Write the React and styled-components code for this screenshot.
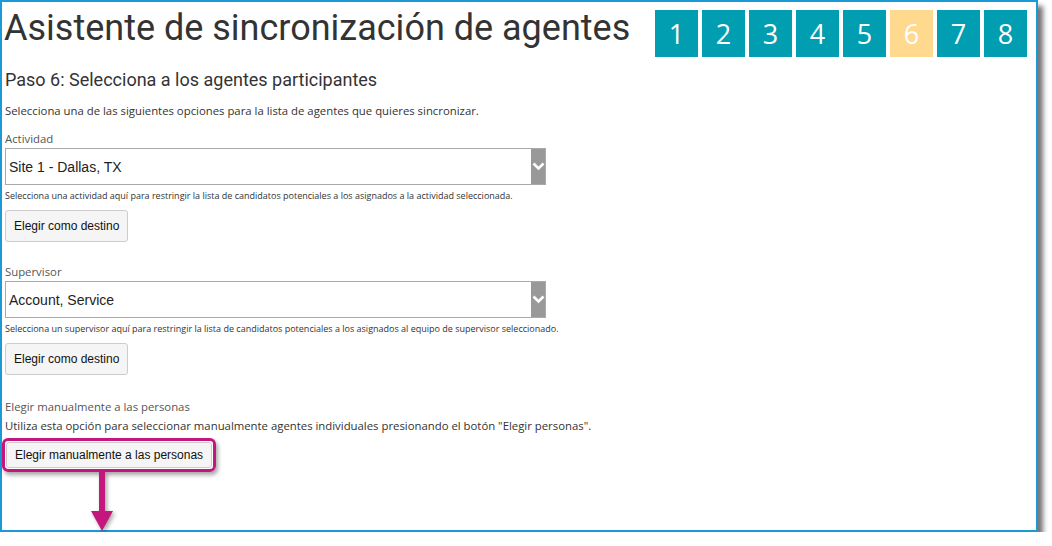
import styled, { createGlobalStyle } from 'styled-components';

const GlobalStyle = createGlobalStyle`
  body {
    margin: 0;
    background: #fff;
  }
`;

const steps = [1, 2, 3, 4, 5, 6, 7, 8];
const current = 6;

export default function App() {
  return (
    <>
      <GlobalStyle />
      <Frame>
        <Header>
          <Title>Asistente de sincronización de agentes</Title>
          <Steps>
            {steps.map((n) => (
              <Step key={n} $active={n === current}>
                {n}
              </Step>
            ))}
          </Steps>
        </Header>

        <Subtitle>Paso 6: Selecciona a los agentes participantes</Subtitle>
        <Intro>Selecciona una de las siguientes opciones para la lista de agentes que quieres sincronizar.</Intro>

        <Field>
          <Label>Actividad</Label>
          <Select value="Site 1 - Dallas, TX" />
          <Help>Selecciona una actividad aquí para restringir la lista de candidatos potenciales a los asignados a la actividad seleccionada.</Help>
          <Button>Elegir como destino</Button>
        </Field>

        <Field>
          <Label>Supervisor</Label>
          <Select value="Account, Service" />
          <Help>Selecciona un supervisor aquí para restringir la lista de candidatos potenciales a los asignados al equipo de supervisor seleccionado.</Help>
          <Button>Elegir como destino</Button>
        </Field>

        <Field>
          <Label>Elegir manualmente a las personas</Label>
          <Intro $tight>Utiliza esta opción para seleccionar manualmente agentes individuales presionando el botón "Elegir personas".</Intro>
          <Callout>
            <Button $small>Elegir manualmente a las personas</Button>
            <Pointer />
          </Callout>
        </Field>
      </Frame>
    </>
  );
}

function Select({ value }) {
  return (
    <SelectBox>
      <SelectValue>{value}</SelectValue>
      <SelectArrow>
        <svg width="13" height="9" viewBox="0 0 13 9">
          <path d="M1.5 1.5 L6.5 6.5 L11.5 1.5" fill="none" stroke="#fff" strokeWidth="2.6" />
        </svg>
      </SelectArrow>
    </SelectBox>
  );
}

function Pointer() {
  return (
    <Arrow>
      <svg width="24" height="60" viewBox="0 0 24 60">
        <rect x="9" y="0" width="6" height="40" fill="#c4177e" />
        <path d="M1 39 L23 39 L12 59 Z" fill="#c4177e" />
      </svg>
    </Arrow>
  );
}

const Frame = styled.div`
  box-sizing: border-box;
  width: 1038px;
  height: 532px;
  border: 2.5px solid #1b9ad7;
  box-shadow: 5px 6px 5px rgba(0, 0, 0, 0.55);
  padding: 8px 9px 0 2px;
  background: #fff;
  font-family: 'Open Sans', 'Noto Sans', sans-serif;
  color: #333;
`;

const Header = styled.div`
  display: flex;
  justify-content: space-between;
  align-items: flex-start;
`;

const Title = styled.h1`
  margin: 0;
  font-family: Roboto, sans-serif;
  font-weight: 400;
  font-size: 36px;
  line-height: 36px;
  color: #333;
`;

const Steps = styled.div`
  display: flex;
  gap: 4px;
`;

const Step = styled.div`
  width: 43px;
  height: 47px;
  display: flex;
  align-items: center;
  justify-content: center;
  background: ${({ $active }) => ($active ? '#ffd98e' : '#009eb0')};
  color: #fff;
  font-family: 'Open Sans', sans-serif;
  font-size: 27px;
`;

const Subtitle = styled.h2`
  margin: 12px 0 0 1px;
  font-family: Roboto, sans-serif;
  font-weight: 400;
  font-size: 18px;
  line-height: 22px;
  color: #333;
`;

const Intro = styled.p`
  margin: ${({ $tight }) => ($tight ? '1px' : '11px')} 0 0 1px;
  font-size: 11.35px;
  line-height: 18px;
  color: #333;
`;

const Field = styled.div`
  display: flex;
  flex-direction: column;
  align-items: flex-start;
  margin-top: 10px;
  & + & {
    margin-top: 21px;
  }
  & + & + & {
    margin-top: 23px;
  }
`;

const Label = styled.div`
  margin-left: 1px;
  font-size: 11.35px;
  line-height: 18px;
  color: #555;
`;

const SelectBox = styled.div`
  box-sizing: border-box;
  width: 541px;
  height: 37px;
  margin: 0 0 0 1px;
  display: flex;
  border: 1px solid #aaa;
  background: #fff;
`;

const SelectValue = styled.div`
  flex: 1;
  display: flex;
  align-items: center;
  padding-left: 3px;
  font-family: 'Liberation Sans', Arial, sans-serif;
  font-size: 14px;
  color: #222;
`;

const SelectArrow = styled.div`
  width: 14px;
  display: flex;
  align-items: center;
  justify-content: center;
  background: #999;
`;

const Help = styled.div`
  margin: 4px 0 0 1px;
  font-size: 9px;
  line-height: 14px;
  color: #333;
`;

const Button = styled.button`
  box-sizing: border-box;
  margin: ${({ $small }) => ($small ? '0' : '7px 0 0 1px')};
  height: ${({ $small }) => ($small ? '26px' : '32px')};
  padding: 0 8px;
  background: #f5f5f5;
  border: 1px solid #ccc;
  border-radius: 3px;
  font-family: 'Liberation Sans', Arial, sans-serif;
  font-size: 12px;
  color: #111;
`;

const Callout = styled.div`
  position: relative;
  margin: 3px 0 0 -2px;
  padding: 1px;
  border: 3px solid #c4177e;
  border-radius: 6px;
  box-shadow: 2px 3px 4px rgba(0, 0, 0, 0.35);
`;

const Arrow = styled.div`
  position: absolute;
  left: 85px;
  top: 100%;
  margin-top: 3px;
  line-height: 0;
  filter: drop-shadow(2px 2px 2px rgba(0, 0, 0, 0.35));
`;
